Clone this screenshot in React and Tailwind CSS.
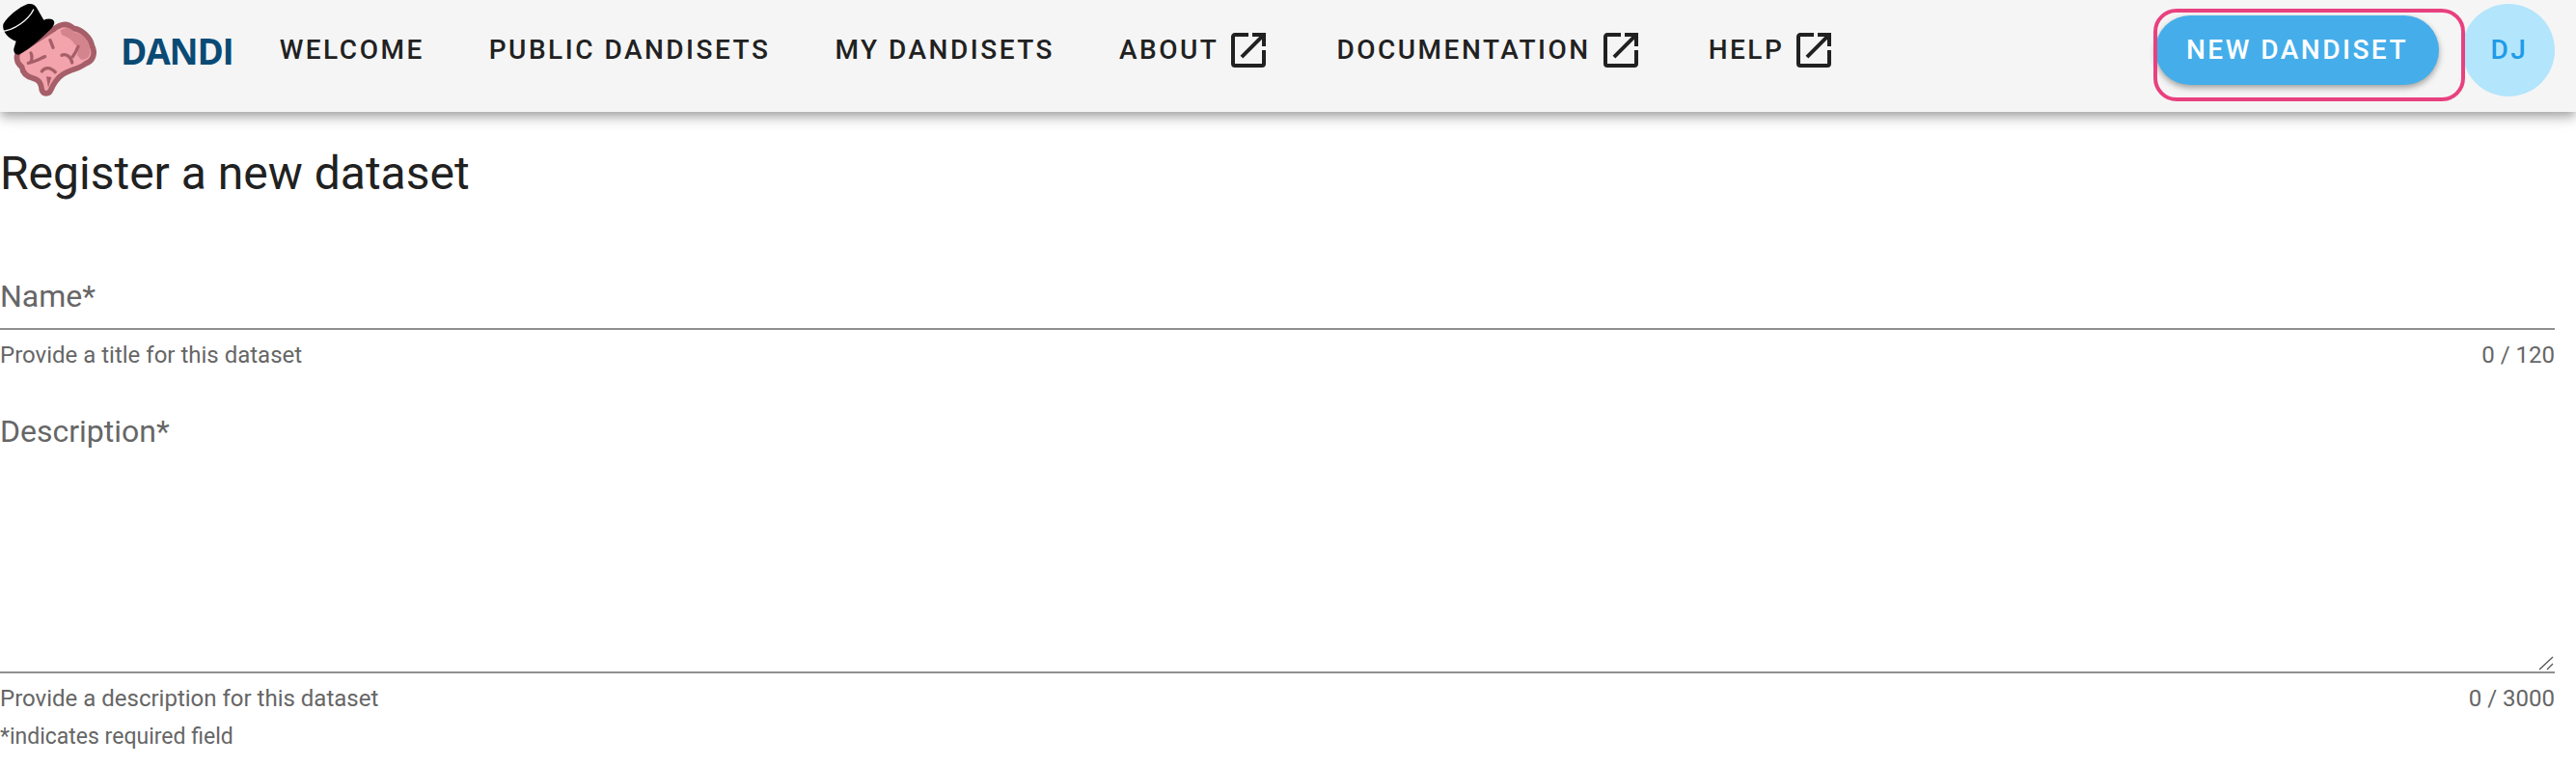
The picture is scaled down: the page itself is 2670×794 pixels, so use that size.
import { Fragment } from "react";

const NAV = [
  { label: "WELCOME" },
  { label: "PUBLIC DANDISETS" },
  { label: "MY DANDISETS" },
  { label: "ABOUT", external: true },
  { label: "DOCUMENTATION", external: true },
  { label: "HELP", external: true },
];

function OpenInNew() {
  return (
    <svg viewBox="0 0 24 24" className="ml-[7px] h-12 w-12 shrink-0" fill="#212121">
      <path d="M14,3V5H17.59L7.76,14.83L9.17,16.24L19,6.41V10H21V3M19,19H5V5H12V3H5C3.89,3 3,3.9 3,5V19A2,2 0 0,0 5,21H19A2,2 0 0,0 21,19V12H19V19Z" />
    </svg>
  );
}

function Logo() {
  return (
    <svg viewBox="0 0 330 312" className="h-[104px] w-[110px] shrink-0">
      {/* brain */}
      <path
        d="M165 92 C185 76 208 68 228 88 C256 92 282 118 286 142 C298 165 290 190 266 198 C248 214 222 214 194 232 C176 244 166 262 158 280 C152 294 134 294 130 280 C128 262 124 250 104 244 C82 238 70 226 68 208 C50 196 48 172 60 160 Z"
        fill="#f2a3ab"
        stroke="#a65f68"
        strokeWidth="17"
        strokeLinejoin="round"
      />
      <path
        d="M188 95 C205 82 222 86 230 100 C256 105 278 125 279 150 C284 170 274 184 256 186 C250 186 246 178 240 172 L246 145 L232 138 C226 125 210 115 192 108 Z"
        fill="#d3848c"
      />
      <path d="M150 272 L144 238 L160 240 Z" fill="#a65f68" />
      <g fill="none" stroke="#a65f68" strokeWidth="10" strokeLinecap="round" strokeLinejoin="round">
        <path d="M243 145 C238 160 232 168 226 176" />
        <path d="M192 172 C205 165 222 178 224 195" />
        <path d="M156 125 L165 148" />
        <path d="M96 165 C100 172 100 185 96 192" />
        <path d="M88 196 C108 192 125 182 140 176" />
        <path d="M130 222 C140 208 155 208 172 224" />
      </g>
      {/* hat */}
      <path
        d="M10 75 C25 50 60 22 85 13 C98 10 108 14 114 24 L136 62 C148 58 162 56 168 66 C172 76 160 90 148 100 C122 125 90 155 58 170 C46 170 40 160 44 148 L50 128 C30 122 5 100 10 75 Z"
        fill="#000"
      />
      <path d="M2 98 C45 95 90 60 104 30" fill="none" stroke="#fff" strokeWidth="4" strokeLinecap="round" />
    </svg>
  );
}

function Field({ label, hint, count, multiline }) {
  return (
    <div className="flex flex-col">
      <div className="h-10 text-[32px] leading-10 text-[#666]">{label}</div>
      {multiline ? (
        <div className="relative">
          <textarea className="block h-[231px] w-full resize-none border-b-2 border-[#8f8f8f] outline-none" />
          <svg viewBox="0 0 16 16" className="absolute right-[1px] bottom-[3px] h-4 w-4" stroke="#555" strokeWidth="1.3">
            <path d="M1 15 L15 2 M9 15 L15 9" />
          </svg>
        </div>
      ) : (
        <input className="block h-[15px] w-full border-b-2 border-[#8f8f8f] outline-none" />
      )}
      <div className="mt-[14px] flex justify-between text-[24px] leading-6 text-[#666]">
        <span>{hint}</span>
        <span>{count}</span>
      </div>
    </div>
  );
}

export default function App() {
  return (
    <div className="h-[794px] overflow-hidden bg-white font-['Roboto',sans-serif] text-[#212121]">
      <header className="relative z-10 flex h-[116px] items-center bg-[#f5f5f5] pr-[22px] pb-3 shadow-[0_4px_8px_-2px_rgba(0,0,0,0.2),0_8px_10px_0_rgba(0,0,0,0.14),0_2px_20px_0_rgba(0,0,0,0.12)]">
        <Logo />
        <span className="ml-[15px] font-['Open_Sans',sans-serif] text-[37px] leading-none font-bold tracking-[-1.2px] text-[#0a4a75]">DANDI</span>
        <nav className="ml-[48px] flex items-center gap-[67px]">
          {NAV.map((item) => (
            <Fragment key={item.label}>
              <a className="flex h-12 items-center text-[28px] font-medium tracking-[2.5px] whitespace-nowrap">
                {item.label}
                {item.external && <OpenInNew />}
              </a>
            </Fragment>
          ))}
        </nav>
        <div className="ml-auto flex items-center gap-6">
          <div className="relative">
            <button className="h-[72px] rounded-full bg-[#45aeea] px-8 text-[28px] font-medium tracking-[2.5px] whitespace-nowrap text-white shadow-[0_3px_6px_rgba(0,0,0,0.35)]">
              NEW DANDISET
            </button>
            <div className="absolute -top-[7px] -right-[27px] -bottom-[17px] -left-[2px] z-10 rounded-[24px] border-4 border-[#e8417f]" />
          </div>
          <div className="flex h-24 w-24 items-center justify-center rounded-full bg-[#b3e5fc] pl-[2px] text-[28px] font-medium tracking-[2.5px] text-[#1e9be8]">
            DJ
          </div>
        </div>
      </header>

      <main className="pr-[22px]">
        <h1 className="mt-8 text-[48px] leading-[64px] font-normal">Register a new dataset</h1>
        <div className="mt-[75px] flex flex-col gap-[47px]">
          <Field label="Name*" hint="Provide a title for this dataset" count="0 / 120" />
          <Field label="Description*" hint="Provide a description for this dataset" count="0 / 3000" multiline />
        </div>
        <p className="mt-4 text-[23px] leading-6 text-[#666]">*indicates required field</p>
      </main>
    </div>
  );
}
